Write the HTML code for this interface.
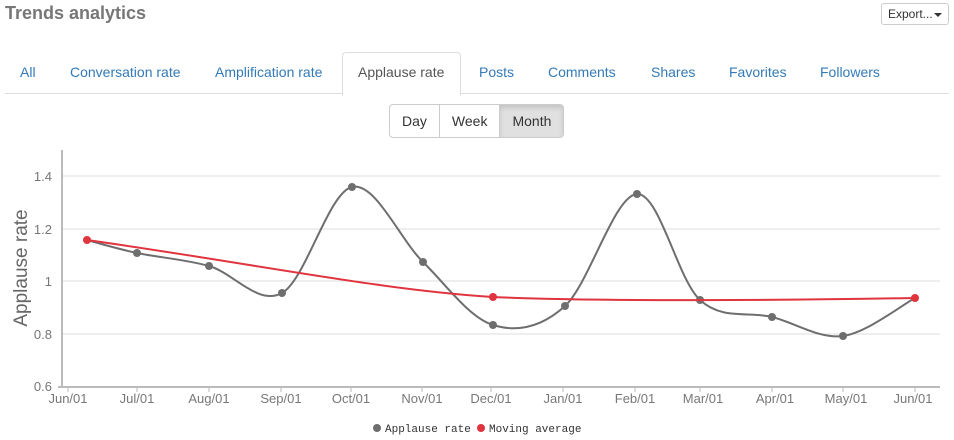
<!DOCTYPE html>
<html><head><meta charset="utf-8"><style>
body{margin:0;width:954px;height:440px;background:#fff;font-family:"Liberation Sans",Arial,sans-serif;position:relative;overflow:hidden}
.title{position:absolute;left:5px;top:3px;font-size:18px;font-weight:bold;color:#777}
.export{position:absolute;left:881px;top:3px;width:66px;height:20px;border:1px solid #ccc;border-radius:3px;font-size:12px;color:#333;line-height:20px;text-indent:6px;box-sizing:content-box}
.export:after{content:"";position:absolute;right:6px;top:9px;border-left:4px solid transparent;border-right:4px solid transparent;border-top:4px solid #333}
.tabline{position:absolute;left:5px;right:5px;top:93px;border-top:1px solid #ddd}
.tab{position:absolute;top:64px;font-size:14px;color:#337ab7}
.active{position:absolute;left:342px;top:52px;width:117px;height:42px;border:1px solid #ddd;border-bottom:1px solid #fff;border-radius:4px 4px 0 0;background:#fff}
.btns{position:absolute;left:389px;top:104px;height:32px;border:1px solid #ccc;border-radius:4px;display:flex;font-size:14px;color:#333;overflow:hidden}
.btns div{line-height:32px;padding:0 12px;border-right:1px solid #ccc}
.btns div:last-child{border:none;background:#e0e0e0;box-shadow:inset 0 3px 5px rgba(0,0,0,.12)}
</style></head><body>
<div class="title">Trends analytics</div>
<div class="export">Export...</div>
<div class="tabline"></div>
<div class="active"></div>
<div class="tab" style="left:20px">All</div>
<div class="tab" style="left:70px">Conversation rate</div>
<div class="tab" style="left:215px">Amplification rate</div>
<div class="tab" style="left:358px;color:#555">Applause rate</div>
<div class="tab" style="left:479px">Posts</div>
<div class="tab" style="left:548px">Comments</div>
<div class="tab" style="left:651px">Shares</div>
<div class="tab" style="left:729px">Favorites</div>
<div class="tab" style="left:820px">Followers</div>
<div class="btns"><div>Day</div><div>Week</div><div>Month</div></div>
<svg width="954" height="440" style="position:absolute;left:0;top:0" font-family="Liberation Sans,sans-serif">
<g stroke="#ddd" stroke-width="1">
<line x1="63" x2="940" y1="176" y2="176"/><line x1="63" x2="940" y1="229" y2="229"/><line x1="63" x2="940" y1="281" y2="281"/><line x1="63" x2="940" y1="334" y2="334"/>
</g>
<line x1="62" y1="150" x2="62" y2="388" stroke="#bbb" stroke-width="2"/>
<line x1="58" y1="387" x2="940" y2="387" stroke="#bbb" stroke-width="2"/>
<g stroke="#bbb"><line x1="68" x2="68" y1="388" y2="392"/><line x1="137" x2="137" y1="388" y2="392"/><line x1="209" x2="209" y1="388" y2="392"/><line x1="281" x2="281" y1="388" y2="392"/><line x1="351" x2="351" y1="388" y2="392"/><line x1="422" x2="422" y1="388" y2="392"/><line x1="491" x2="491" y1="388" y2="392"/><line x1="563" x2="563" y1="388" y2="392"/><line x1="635" x2="635" y1="388" y2="392"/><line x1="700" x2="700" y1="388" y2="392"/><line x1="772" x2="772" y1="388" y2="392"/><line x1="843" x2="843" y1="388" y2="392"/><line x1="915" x2="915" y1="388" y2="392"/></g>
<g fill="#777" font-size="13" text-anchor="end"><text x="52" y="181">1.4</text><text x="52" y="234">1.2</text><text x="52" y="286">1</text><text x="52" y="339">0.8</text><text x="52" y="391">0.6</text></g>
<text transform="translate(27,268) rotate(-90)" text-anchor="middle" font-size="19" fill="#666">Applause rate</text>
<g fill="#777" font-size="13" text-anchor="middle"><text x="68" y="403">Jun/01</text><text x="137" y="403">Jul/01</text><text x="209" y="403">Aug/01</text><text x="281" y="403">Sep/01</text><text x="351" y="403">Oct/01</text><text x="422" y="403">Nov/01</text><text x="491" y="403">Dec/01</text><text x="563" y="403">Jan/01</text><text x="635" y="403">Feb/01</text><text x="703" y="403">Mar/01</text><text x="775" y="403">Apr/01</text><text x="846" y="403">May/01</text><text x="913" y="403">Jun/01</text></g>
<path fill="none" stroke="#6e6e6e" stroke-width="2" d="M87,240 C95.3,242.2 116.7,248.7 137,253 C157.3,257.3 184.8,259.3 209,266 C233.2,272.7 258.2,306.2 282,293 C305.8,279.8 328.5,192.2 352,187 C375.5,181.8 399.5,239 423,262 C446.5,285 469.3,317.7 493,325 C516.7,332.3 541,327.8 565,306 C589,284.2 614.5,195 637,194 C659.5,193 677.5,279.5 700,300 C722.5,320.5 748.2,311 772,317 C795.8,323 819.2,339.2 843,336 C866.8,332.8 903,304.3 915,298"/>
<g fill="#6e6e6e"><circle cx="137" cy="253" r="4"/><circle cx="209" cy="266" r="4"/><circle cx="282" cy="293" r="4"/><circle cx="352" cy="187" r="4"/><circle cx="423" cy="262" r="4"/><circle cx="493" cy="325" r="4"/><circle cx="565" cy="306" r="4"/><circle cx="637" cy="194" r="4"/><circle cx="700" cy="300" r="4"/><circle cx="772" cy="317" r="4"/><circle cx="843" cy="336" r="4"/></g>
<path fill="none" stroke="#e0343f" stroke-width="2" d="M87,240 C250,263 380,290 493,297 C600,302 800,300 915,298"/>
<g fill="#e0343f"><circle cx="87" cy="240" r="4"/><circle cx="493" cy="297" r="4"/><circle cx="915" cy="298" r="4"/></g>
<circle cx="377" cy="428" r="4" fill="#6e6e6e"/>
<text x="385" y="432" font-family="Liberation Mono,monospace" font-size="11" fill="#333">Applause rate</text>
<circle cx="481" cy="428" r="4" fill="#e0343f"/>
<text x="489" y="432" font-family="Liberation Mono,monospace" font-size="11" fill="#333">Moving average</text>
</svg>
</body></html>
